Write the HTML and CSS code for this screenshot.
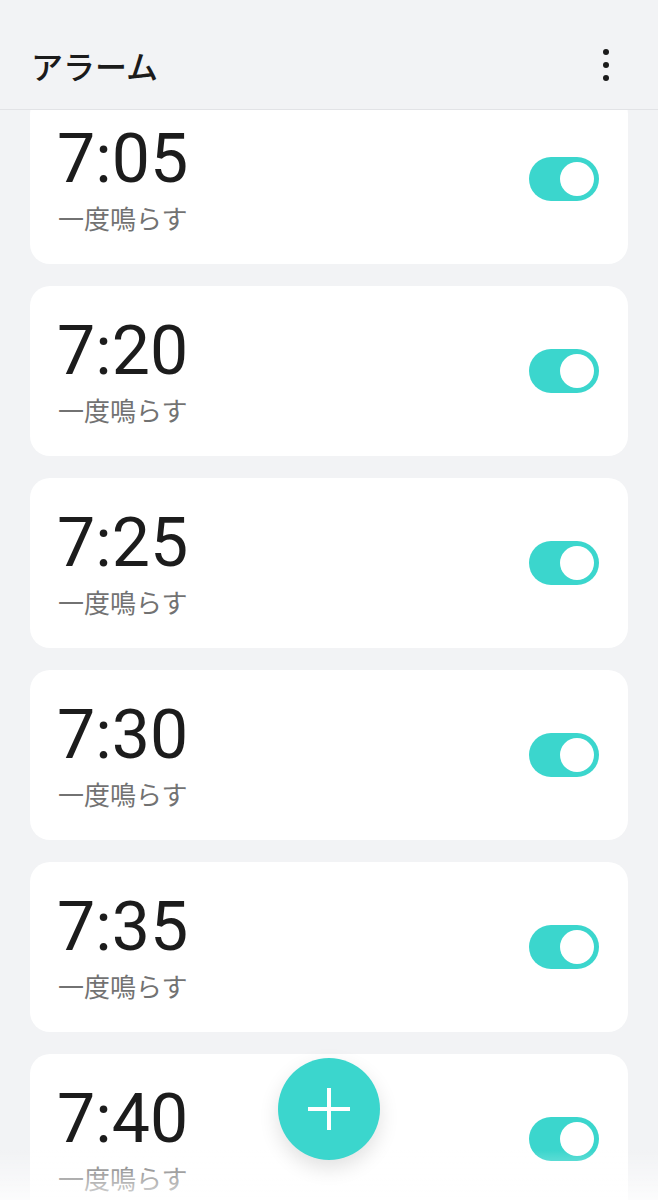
FILE: index.html
```html
<!DOCTYPE html>
<html lang="ja">
<head>
    <meta charset="UTF-8">
    <meta name="viewport" content="width=device-width, initial-scale=1.0">
    <title>アラーム</title>
    <link rel="stylesheet" href="styles.css">
</head>
<body>
    <header class="app-bar">
        <h1 class="app-title">アラーム</h1>
        <button class="menu-btn" aria-label="メニュー">
            <span class="dot"></span>
            <span class="dot"></span>
            <span class="dot"></span>
        </button>
    </header>

    <main class="alarm-list">
        <div class="alarm-card">
            <div class="alarm-info">
                <div class="alarm-time">7:05</div>
                <div class="alarm-repeat">一度鳴らす</div>
            </div>
            <span class="toggle on"><span class="knob"></span></span>
        </div>
        <div class="alarm-card">
            <div class="alarm-info">
                <div class="alarm-time">7:20</div>
                <div class="alarm-repeat">一度鳴らす</div>
            </div>
            <span class="toggle on"><span class="knob"></span></span>
        </div>
        <div class="alarm-card">
            <div class="alarm-info">
                <div class="alarm-time">7:25</div>
                <div class="alarm-repeat">一度鳴らす</div>
            </div>
            <span class="toggle on"><span class="knob"></span></span>
        </div>
        <div class="alarm-card">
            <div class="alarm-info">
                <div class="alarm-time">7:30</div>
                <div class="alarm-repeat">一度鳴らす</div>
            </div>
            <span class="toggle on"><span class="knob"></span></span>
        </div>
        <div class="alarm-card">
            <div class="alarm-info">
                <div class="alarm-time">7:35</div>
                <div class="alarm-repeat">一度鳴らす</div>
            </div>
            <span class="toggle on"><span class="knob"></span></span>
        </div>
        <div class="alarm-card">
            <div class="alarm-info">
                <div class="alarm-time">7:40</div>
                <div class="alarm-repeat">一度鳴らす</div>
            </div>
            <span class="toggle on"><span class="knob"></span></span>
        </div>
    </main>

    <div class="bottom-fade"></div>

    <button class="fab" aria-label="アラームを追加">
        <svg width="46" height="46" viewBox="0 0 46 46">
            <path d="M23 2 V44 M2 23 H44" stroke="#fff" stroke-width="4" fill="none"/>
        </svg>
    </button>
</body>
</html>
```

FILE: styles.css
```css
body {
    margin: 0;
    background: #f2f3f5;
    font-family: Roboto, "Noto Sans CJK JP", sans-serif;
    height: 1200px;
    overflow: hidden;
}
.app-bar {
    position: fixed;
    top: 0;
    left: 0;
    right: 0;
    z-index: 2;
    height: 110px;
    box-sizing: border-box;
    background: #f2f3f5;
    border-bottom: 1px solid #e2e3e6;
    display: flex;
    align-items: center;
    justify-content: space-between;
    padding: 20px 49px 0 31px;
}
.app-title {
    margin: 0;
    font-family: "Noto Sans CJK JP", sans-serif;
    font-size: 32px;
    font-weight: 500;
    color: #1b1b1b;
}
.menu-btn {
    border: none;
    background: none;
    padding: 0;
    display: flex;
    flex-direction: column;
    gap: 7px;
    align-items: center;
}
.dot {
    width: 6px;
    height: 6px;
    border-radius: 50%;
    background: #1b1b1b;
}
.alarm-list {
    padding: 94px 30px 0;
    display: flex;
    flex-direction: column;
    gap: 22px;
}
.alarm-card {
    height: 170px;
    box-sizing: border-box;
    background: white;
    border-radius: 20px;
    padding: 0 29px 0 27px;
    display: flex;
    align-items: center;
    justify-content: space-between;
}
.alarm-time {
    font-size: 68px;
    line-height: 68px;
    color: #1c1c1c;
}
.alarm-repeat {
    margin-top: 10px;
    padding-left: 1px;
    font-family: "Noto Sans CJK JP", sans-serif;
    font-size: 26px;
    line-height: 30px;
    color: #727272;
}
.toggle {
    width: 70px;
    height: 44px;
    box-sizing: border-box;
    border-radius: 22px;
    background: #3bd6cd;
    display: flex;
    align-items: center;
    justify-content: flex-end;
    padding: 0 5px;
}
.knob {
    width: 34px;
    height: 34px;
    border-radius: 50%;
    background: white;
}
.bottom-fade {
    position: fixed;
    left: 0;
    right: 0;
    bottom: 0;
    height: 50px;
    background: linear-gradient(rgba(255, 255, 255, 0), rgba(255, 255, 255, 0.75));
}
.fab {
    position: fixed;
    left: 278px;
    bottom: 40px;
    z-index: 3;
    width: 102px;
    height: 102px;
    border: none;
    border-radius: 50%;
    background: #3bd6cd;
    box-shadow: 0 8px 20px rgba(0, 0, 0, 0.12);
    display: flex;
    align-items: center;
    justify-content: center;
    padding: 0;
}
```
